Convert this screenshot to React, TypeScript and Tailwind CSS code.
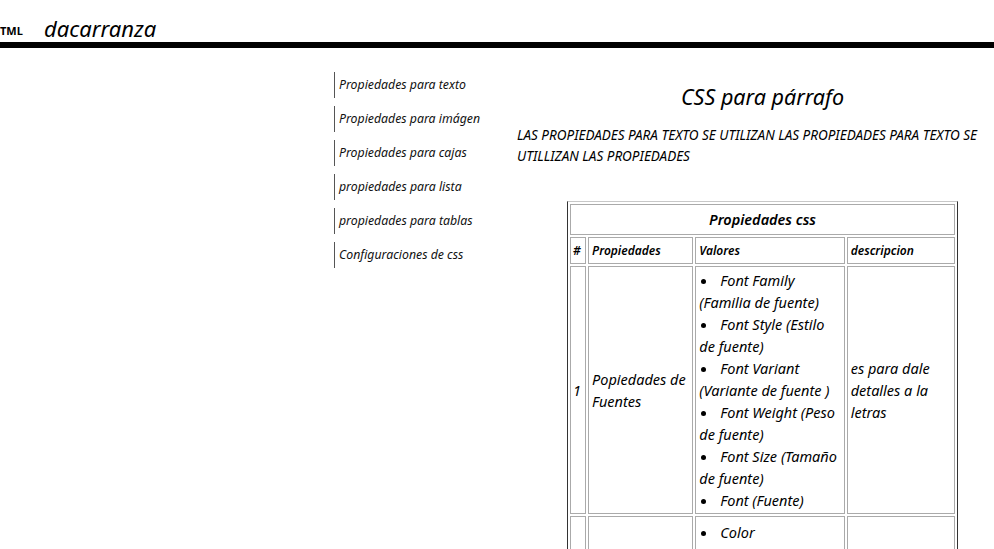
const menu = [
  'Propiedades para texto',
  'Propiedades para imágen',
  'Propiedades para cajas',
  'propiedades para lista',
  'propiedades para tablas',
  'Configuraciones de css',
];

const fuentes = [
  'Font Family (Familia de fuente)',
  'Font Style (Estilo de fuente)',
  'Font Variant (Variante de fuente )',
  'Font Weight (Peso de fuente)',
  'Font Size (Tamaño de fuente)',
  'Font (Fuente)',
];

function Bullets({ items }: { items: string[] }) {
  return (
    <ul className="m-0 p-0 list-none">
      {items.map((it) => (
        <li key={it} className="leading-[22px]">
          <span className="inline-block w-[21px] pl-[2px] align-middle">
            <span className="block w-[5px] h-[5px] rounded-full bg-black mb-[2px]" />
          </span>
          {it}
        </li>
      ))}
    </ul>
  );
}

export default function App() {
  return (
    <div className="min-h-screen bg-white text-black italic font-['Noto_Sans','Open_Sans',sans-serif] overflow-hidden">
      <header className="h-[42px] flex items-end">
        <span className="not-italic font-bold text-[11px] leading-none mb-[6px] w-[22px]">TML</span>
        <span className="ml-[22px] text-[22px] leading-[28px]">dacarranza</span>
      </header>
      <div className="h-[6px] bg-black" />

      <div className="flex">
        <nav className="ml-[334px] w-[183px] shrink-0 pt-[24px] flex flex-col gap-[8px]">
          {menu.map((m) => (
            <a key={m} className="h-[26px] border-l border-[#555] pl-[4px] flex items-center text-[12.3px] text-[#111]">
              {m}
            </a>
          ))}
        </nav>

        <main className="w-[477px] shrink-0 pt-[34px]">
          <h1 className="text-center text-[21.5px] leading-[30px] pl-[14px]">CSS para párrafo</h1>
          <p className="mt-[13px] text-[13.5px] leading-[21px] uppercase">
            Las propiedades para texto se utilizan las propiedades para texto se utillizan las propiedades
          </p>

          <table className="ml-[50px] mt-[34px] w-[391px] table-fixed border-separate border-spacing-[2px] border border-l-[#333] border-t-[#c8c8c8] border-r-[#333] border-b-[#888] text-[14.5px]">
            <colgroup>
              <col className="w-[16px]" />
              <col className="w-[105px]" />
              <col className="w-[149px]" />
              <col className="w-[108px]" />
            </colgroup>
            <tbody>
              <tr>
                <td colSpan={4} className="h-[31px] border border-[#aaa] text-center font-semibold text-[14.5px]">Propiedades css</td>
              </tr>
              <tr className="text-[12px] font-semibold">
                <td className="h-[27px] border border-[#aaa] px-[2px]">#</td>
                <td className="border border-[#aaa] px-[3px]">Propiedades</td>
                <td className="border border-[#aaa] px-[3px]">Valores</td>
                <td className="border border-[#aaa] px-[3px]">descripcion</td>
              </tr>
              <tr className="leading-[22px]">
                <td className="border border-[#aaa] px-[2px] align-middle">1</td>
                <td className="border border-[#aaa] px-[3px] align-middle">Popiedades de Fuentes</td>
                <td className="border border-[#aaa] px-[3px] py-[2px] align-middle">
                  <Bullets items={fuentes} />
                </td>
                <td className="border border-[#aaa] px-[3px] align-middle">es para dale detalles a la letras</td>
              </tr>
              <tr className="leading-[22px]">
                <td className="h-[80px] border border-[#aaa] px-[3px]"></td>
                <td className="border border-[#aaa] px-[3px]"></td>
                <td className="border border-[#aaa] px-[3px] pt-[4px] align-top">
                  <Bullets items={['Color']} />
                </td>
                <td className="border border-[#aaa] px-[3px]"></td>
              </tr>
            </tbody>
          </table>
        </main>
      </div>
    </div>
  );
}
